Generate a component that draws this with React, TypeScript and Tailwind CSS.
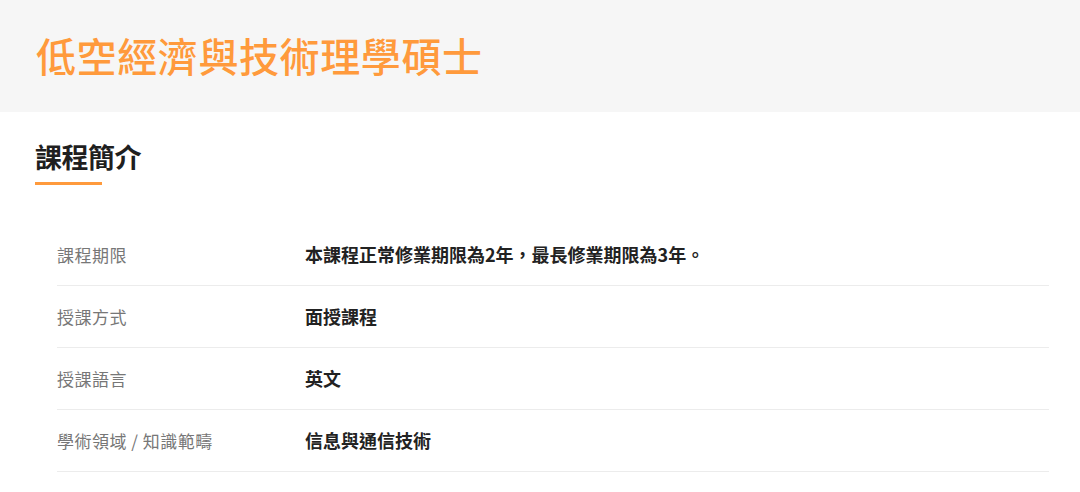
const font = "font-['Noto_Sans_CJK_TC','Noto_Sans',sans-serif]";

interface InfoRow {
    label: string;
    value: string;
}

const rows: InfoRow[] = [
    { label: '課程期限', value: '本課程正常修業期限為2年，最長修業期限為3年。' },
    { label: '授課方式', value: '面授課程' },
    { label: '授課語言', value: '英文' },
    { label: '學術領域 / 知識範疇', value: '信息與通信技術' },
];

export default function App() {
    return (
        <div className={`${font} w-[1080px] h-[492px] bg-white overflow-hidden`}>
            {/* Title band */}
            <div className="h-[112px] bg-[#f6f6f6] flex items-center px-[36px] pb-[3px]">
                <h1 className="text-[40px] leading-none font-medium tracking-[0.6px] text-[#ff9a3c]">
                    低空經濟與技術理學碩士
                </h1>
            </div>

            {/* Section heading */}
            <div className="pl-[35px] pt-[29px]">
                <h2 className="text-[27px] leading-[32px] font-semibold text-[#1f1f1f] tracking-[-0.5px]">課程簡介</h2>
                <div className="mt-[9px] w-[67px] h-[3px] bg-[#ff9a3c]" />
            </div>

            {/* Info rows */}
            <div className="ml-[57px] mr-[31px] mt-[39px]">
                {rows.map((row) => (
                    <div key={row.label} className="flex items-center h-[62px] border-b border-[#ececec]">
                        <div className="w-[248px] text-[17px] text-[#777777] tracking-[0.5px]">{row.label}</div>
                        <div className="text-[18px] font-bold text-[#222222]">{row.value}</div>
                    </div>
                ))}
            </div>
        </div>
    );
}
